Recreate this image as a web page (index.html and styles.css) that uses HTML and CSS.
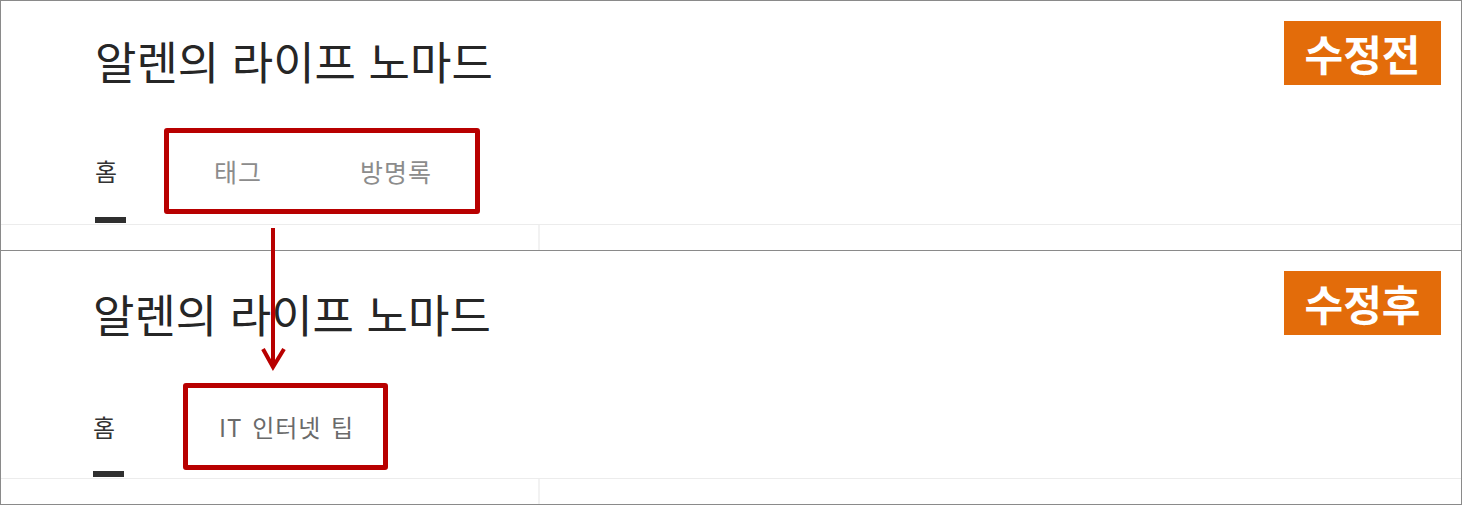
FILE: index.html
```html
<!DOCTYPE html>
<html lang="ko">
<head>
<meta charset="utf-8">
<title>알렌의 라이프 노마드 - 메뉴 수정 전후</title>
<link rel="stylesheet" href="styles.css">
</head>
<body>
<div class="frame">
  <section class="panel panel--before">
    <header class="blog-head">
      <h1 class="blog-title">알렌의 라이프 노마드</h1>
      <nav class="menu">
        <a class="menu-item is-active">홈</a>
        <a class="menu-item">태그</a>
        <a class="menu-item menu-item--wide">방명록</a>
      </nav>
    </header>
    <div class="content">
      <div class="sidebar"></div>
      <div class="main"></div>
    </div>
    <span class="badge">수정전</span>
    <div class="highlight highlight--before"></div>
  </section>

  <section class="panel panel--after">
    <header class="blog-head">
      <h1 class="blog-title">알렌의 라이프 노마드</h1>
      <nav class="menu">
        <a class="menu-item is-active">홈</a>
        <a class="menu-item menu-item--dark">IT 인터넷 팁</a>
      </nav>
    </header>
    <div class="content">
      <div class="sidebar"></div>
      <div class="main"></div>
    </div>
    <span class="badge">수정후</span>
    <div class="highlight highlight--after"></div>
  </section>

  <svg class="arrow" width="30" height="150" viewBox="0 0 30 150" aria-hidden="true">
    <line x1="15" y1="0" x2="15" y2="138" />
    <polyline points="5,121 15,139 26,121" />
  </svg>
</div>
</body>
</html>
```

FILE: styles.css
```css
* {
  box-sizing: border-box;
}

html, body {
  margin: 0;
  padding: 0;
  background: #ffffff;
}

body {
  font-family: "Noto Sans CJK KR", "Noto Sans", sans-serif;
  color: #333333;
}

.frame {
  position: relative;
  width: 1462px;
  border: 1px solid #8a8a8a;
  background: #ffffff;
}

.panel {
  position: relative;
  display: flex;
  flex-direction: column;
}

.panel--before {
  border-bottom: 1px solid #8a8a8a;
}

.blog-head {
  display: flex;
  flex-direction: column;
  align-items: flex-start;
  padding-left: 94px;
  padding-bottom: 1px;
}

.panel--before .blog-head {
  padding-top: 37px;
}

.panel--after .blog-head {
  padding-top: 40px;
  padding-left: 92px;
}

.blog-title {
  margin: 0;
  font-size: 45px;
  line-height: 45px;
  font-weight: 400;
  color: #262626;
  letter-spacing: 0;
}

.menu {
  display: flex;
  align-items: flex-start;
  gap: 95px;
  margin-top: 76px;
}

.panel--after .menu {
  margin-top: 79px;
  gap: 102px;
}

.menu-item {
  display: flex;
  flex-direction: column;
  font-size: 24px;
  line-height: 24px;
  letter-spacing: 1px;
  color: #8c8c8c;
  text-decoration: none;
}

.panel--before .menu-item:not(.is-active) {
  font-size: 25px;
}

.menu-item--wide {
  margin-left: 3px;
}

.menu-item.is-active {
  color: #333333;
}

.menu-item--dark {
  color: #6a6a6a;
  word-spacing: 2px;
}

.menu-item.is-active::after {
  content: "";
  display: block;
  width: 31px;
  height: 6px;
  margin-top: 34px;
  margin-right: -7px;
  background: #2f2f2f;
}

.panel--after .menu-item.is-active::after {
  margin-top: 32px;
}

.content {
  display: grid;
  grid-template-columns: 539px 1fr;
  height: 26px;
  border-top: 1px solid #ececec;
}

.sidebar {
  border-right: 2px solid #f2f2f2;
}

.badge {
  position: absolute;
  top: 20px;
  right: 20px;
  width: 157px;
  height: 64px;
  display: flex;
  align-items: center;
  justify-content: center;
  background: #e36c0a;
  color: #ffffff;
  font-size: 42px;
  font-weight: 700;
  line-height: 1;
}

.highlight {
  position: absolute;
  border: 5px solid #b80000;
  border-radius: 3px;
}

.highlight--before {
  left: 163px;
  top: 127px;
  width: 316px;
  height: 86px;
}

.highlight--after {
  left: 182px;
  top: 132px;
  width: 205px;
  height: 87px;
}

.arrow {
  position: absolute;
  left: 257px;
  top: 227px;
  overflow: visible;
}

.arrow line,
.arrow polyline {
  stroke: #b80000;
  stroke-width: 4;
  fill: none;
}
```
